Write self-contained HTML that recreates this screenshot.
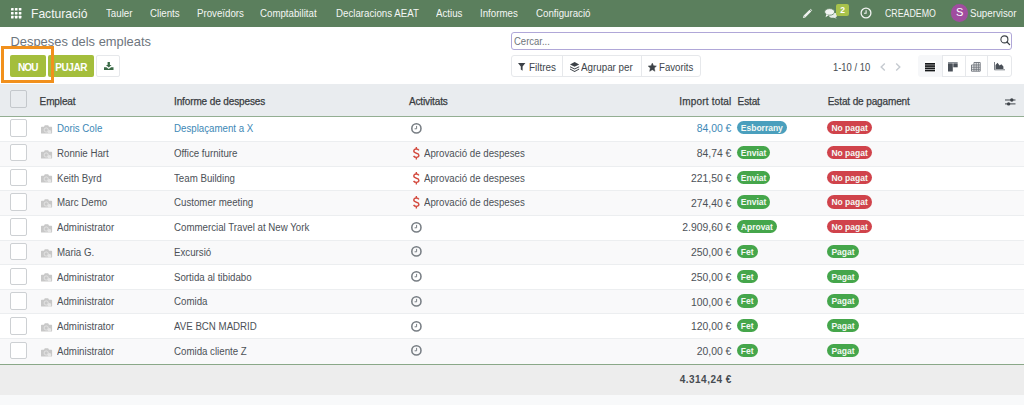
<!DOCTYPE html>
<html><head><meta charset="utf-8">
<style>
*{margin:0;padding:0;box-sizing:border-box}
html,body{width:1024px;height:405px;overflow:hidden;background:#fff;font-family:"Liberation Sans",sans-serif;color:#4c5157}
.a{position:absolute;white-space:nowrap}
svg.a{overflow:visible}
#nav{position:absolute;left:0;top:0;width:1024px;height:27px;background:#5b7f5d}
.nv{position:absolute;top:8.2px;font-size:9.7px;line-height:11px;color:#f4f6f4;white-space:nowrap}
.btn{position:absolute;top:55.2px;height:22px;background:#a4be3c;border-radius:2px;color:#fff;font-weight:bold;font-size:10px;letter-spacing:-0.4px;line-height:25.8px;text-align:center}
.grp{position:absolute;top:55px;height:22px;border:1px solid #e6e8eb;border-radius:3px;background:#fff}
.hd{position:absolute;top:95.6px;font-size:10px;letter-spacing:-0.12px;line-height:11px;font-weight:normal;color:#383c41;-webkit-text-stroke:0.25px #383c41;white-space:nowrap}
.row{position:absolute;left:0;width:1024px}
.cb{position:absolute;left:10px;width:17px;height:17.5px;border:1px solid #cdd0d3;border-radius:2px;background:#fff}
.tx{position:absolute;font-size:9.7px;line-height:11px;color:#4c5157;white-space:nowrap}
.bd{position:absolute;height:13.3px;border-radius:7px;color:#f4f8f4;font-size:8.5px;font-weight:bold;line-height:15px;padding:0 4px;white-space:nowrap}
</style></head><body>
<div id="nav">
<svg class="a" style="left:11px;top:8px" width="10.4" height="10.4" viewBox="0 0 10.4 10.4" fill="#fff"><rect x="0" y="0" width="2.6" height="2.6" rx="0.4"/><rect x="3.9" y="0" width="2.6" height="2.6" rx="0.4"/><rect x="7.8" y="0" width="2.6" height="2.6" rx="0.4"/><rect x="0" y="3.9" width="2.6" height="2.6" rx="0.4"/><rect x="3.9" y="3.9" width="2.6" height="2.6" rx="0.4"/><rect x="7.8" y="3.9" width="2.6" height="2.6" rx="0.4"/><rect x="0" y="7.8" width="2.6" height="2.6" rx="0.4"/><rect x="3.9" y="7.8" width="2.6" height="2.6" rx="0.4"/><rect x="7.8" y="7.8" width="2.6" height="2.6" rx="0.4"/></svg>
<div class="nv" style="left:31px;top:6.6px;font-size:12.1px;line-height:14px">Facturació</div>
<div class="nv" style="left:105.5px;font-size:10px;transform:scaleX(0.970);transform-origin:0 0">Tauler</div>
<div class="nv" style="left:149.5px;font-size:10px;transform:scaleX(0.970);transform-origin:0 0">Clients</div>
<div class="nv" style="left:196.7px;font-size:10px;transform:scaleX(0.970);transform-origin:0 0">Proveïdors</div>
<div class="nv" style="left:260.4px;font-size:10px;transform:scaleX(0.970);transform-origin:0 0">Comptabilitat</div>
<div class="nv" style="left:336.1px;font-size:10px;transform:scaleX(0.970);transform-origin:0 0">Declaracions AEAT</div>
<div class="nv" style="left:435.5px;font-size:10px;transform:scaleX(0.970);transform-origin:0 0">Actius</div>
<div class="nv" style="left:480px;font-size:10px;transform:scaleX(0.970);transform-origin:0 0">Informes</div>
<div class="nv" style="left:535.7px;font-size:10px;transform:scaleX(0.970);transform-origin:0 0">Configuració</div>
<svg class="a" style="left:802px;top:8px" width="11" height="11" viewBox="0 0 11 11"><path d="M2.6 8.4 L8.4 2.6" stroke="#f0f2f0" stroke-width="2.5" stroke-linecap="butt"/><path d="M8.9 2.1 L9.4 1.6" stroke="#f0f2f0" stroke-width="2.5"/><path d="M0.9 10.1 L1.6 7.4 L3.6 9.4 Z" fill="#f0f2f0"/></svg>
<svg class="a" style="left:824px;top:8px" width="14" height="11" viewBox="0 0 14 11"><ellipse cx="9" cy="7.2" rx="4" ry="2.6" fill="#e8ece8"/><path d="M11 9 L12.8 10.8 L9.5 9.6 Z" fill="#e8ece8"/><ellipse cx="5.6" cy="3.9" rx="5" ry="3.3" fill="#f2f4f2" stroke="#5b7f5d" stroke-width="0.8"/><path d="M2.2 6.2 L1.6 9.2 L5 7 Z" fill="#f2f4f2"/></svg>
<div class="a" style="left:836px;top:3.5px;width:13.3px;height:12px;background:#a7c24b;border-radius:2px;color:#fff;font-size:8.5px;font-weight:bold;line-height:12px;text-align:center">2</div>
<svg class="a" style="left:859.5px;top:7.3px" width="12" height="12" viewBox="0 0 12 12"><circle cx="6" cy="6" r="4.9" fill="none" stroke="#f2f4f2" stroke-width="1.3"/><path d="M6.1 3.2 V6.3 H4" fill="none" stroke="#f2f4f2" stroke-width="1.1"/></svg>
<div class="nv" style="left:885px;top:8.3px;font-size:10px;transform:scaleX(0.88);transform-origin:0 0">CREADEMO</div>
<div class="a" style="left:950.8px;top:4.3px;width:17.5px;height:17.5px;border-radius:50%;background:#a04d9f;color:#fff;font-size:11px;line-height:17.5px;text-align:center">S</div>
<div class="nv" style="left:970.4px;font-size:10px;transform:scaleX(0.970);transform-origin:0 0">Supervisor</div>
</div>
<div class="a" style="left:10.5px;top:34.0px;font-size:12.9px;line-height:15px;color:#6d757d">Despeses dels empleats</div>
<div class="btn" style="left:10px;width:36px;letter-spacing:-0.9px;text-indent:-0.6px">NOU</div>
<div class="btn" style="left:48.2px;width:46px">PUJAR</div>
<div class="grp" style="left:96.4px;width:23.3px;border-radius:2px"></div>
<svg class="a" style="left:103.5px;top:62px" width="9.5" height="8" viewBox="0 0 9.5 8"><path d="M3.6 0 H5.9 V3 H7.6 L4.75 5.6 L1.9 3 H3.6 Z" fill="#3b6a47"/><path d="M0 5.2 H2.4 L4.75 7 L7.1 5.2 H9.5 V8 H0 Z" fill="#3b6a47"/></svg>
<div class="a" style="left:1px;top:46.4px;width:52.7px;height:36.4px;border:3.5px solid #f1901d"></div>
<div class="a" style="left:511.2px;top:31.7px;width:501px;height:18.6px;border:1px solid #b0a7d8;border-radius:3px;background:#fff"></div>
<div class="tx" style="left:513.9px;top:35.7px;font-size:10px;color:#6f757b;transform:scaleX(0.950);transform-origin:0 0">Cercar...</div>
<svg class="a" style="left:1000px;top:35px" width="11" height="11" viewBox="0 0 11 11"><circle cx="4.4" cy="4.4" r="3.5" fill="none" stroke="#3c4147" stroke-width="1.1"/><path d="M7 7 L9.6 9.6" stroke="#3c4147" stroke-width="1.3" stroke-linecap="round"/></svg>
<div class="grp" style="left:511.2px;width:189.4px"></div>
<div class="a" style="left:562px;top:55.5px;width:1px;height:21.5px;background:#e6e8eb"></div>
<div class="a" style="left:640.5px;top:55.5px;width:1px;height:21.5px;background:#e6e8eb"></div>
<svg class="a" style="left:518.4px;top:62.9px" width="7.4" height="7.8" viewBox="0 0 7.4 7.8"><path d="M0 0 H7.4 L4.6 3.4 V7.8 L2.8 6.6 V3.4 Z" fill="#3c4147"/></svg>
<div class="tx" style="left:528.5px;top:62.3px;font-size:10px;color:#40464c;transform:scaleX(0.990);transform-origin:0 0">Filtres</div>
<svg class="a" style="left:569.5px;top:62px" width="9.2" height="10" viewBox="0 0 9.2 10"><path d="M4.6 0 L9.2 2.4 L4.6 4.8 L0 2.4 Z" fill="#3c4147"/><path d="M0 4.2 L4.6 6.6 L9.2 4.2 V5.2 L4.6 7.6 L0 5.2 Z" fill="#3c4147"/><path d="M0 6.6 L4.6 9 L9.2 6.6 V7.6 L4.6 10 L0 7.6 Z" fill="#3c4147"/></svg>
<div class="tx" style="left:581.3px;top:62.3px;font-size:10px;color:#40464c;transform:scaleX(0.980);transform-origin:0 0">Agrupar per</div>
<svg class="a" style="left:647.6px;top:62.5px" width="8.6" height="8.4" viewBox="0 0 24 23"><path d="M12 0 L15.5 7.3 L23.6 8.3 L17.6 13.9 L19.3 23 L12 18.6 L4.7 23 L6.4 13.9 L0.4 8.3 L8.5 7.3 Z" fill="#3c4147" stroke="#3c4147" stroke-width="1.2" stroke-linejoin="round"/></svg>
<div class="tx" style="left:658.9px;top:62.3px;font-size:10px;color:#40464c;transform:scaleX(0.965);transform-origin:0 0">Favorits</div>
<div class="tx" style="left:832.9px;top:61.8px;font-size:10px;color:#464c52;transform:scaleX(0.940);transform-origin:0 0">1-10 / 10</div>
<svg class="a" style="left:879.9px;top:62.5px" width="6" height="8" viewBox="0 0 6 8"><path d="M4.8 0.6 L1.2 4 L4.8 7.4" fill="none" stroke="#c5cad0" stroke-width="1.4"/></svg>
<svg class="a" style="left:895.3px;top:62.5px" width="6" height="8" viewBox="0 0 6 8"><path d="M1.2 0.6 L4.8 4 L1.2 7.4" fill="none" stroke="#c5cad0" stroke-width="1.4"/></svg>
<div class="grp" style="left:941.2px;width:71.2px;border-radius:0 3px 3px 0"></div>
<div class="a" style="left:918px;top:55.4px;width:23.7px;height:21.6px;background:#f6f7f9;border-radius:3px 0 0 3px"></div>
<div class="a" style="left:924.5px;top:61.3px;width:11px;height:10.5px;background:#fff"></div>
<div class="a" style="left:941.7px;top:55.5px;width:1px;height:21.5px;background:#e6e8eb"></div>
<div class="a" style="left:964.8px;top:55.5px;width:1px;height:21.5px;background:#e6e8eb"></div>
<div class="a" style="left:987.3px;top:55.5px;width:1px;height:21.5px;background:#e6e8eb"></div>
<svg class="a" style="left:925px;top:62.6px" width="10" height="8.4" viewBox="0 0 10 8.4" fill="#16181a"><rect y="0" width="10" height="1.7"/><rect y="2.23" width="10" height="1.7"/><rect y="4.46" width="10" height="1.7"/><rect y="6.7" width="10" height="1.7"/></svg>
<svg class="a" style="left:948.1px;top:61.8px" width="9.7" height="9.5" viewBox="0 0 9.7 9.5"><rect x="0" y="0" width="9.7" height="1" fill="#8a9097"/><rect x="0" y="1.3" width="4.8" height="8.2" fill="#4a5058"/><rect x="5.3" y="1.3" width="4.4" height="4" fill="#4a5058"/></svg>
<svg class="a" style="left:971.2px;top:61.8px" width="9.7" height="9.7" viewBox="0 0 9.7 9.7"><path d="M3 0.5 H9.2 V9.2 H0.5 V3 H9.2 M0.5 5.2 H9.2 M0.5 7.3 H9.2 M3 0.5 V9.2 M5.2 0.5 V9.2 M7.3 0.5 V9.2" fill="none" stroke="#6b7178" stroke-width="0.9"/></svg>
<svg class="a" style="left:994.1px;top:62.4px" width="11" height="8.3" viewBox="0 0 11 8.3"><path d="M0.5 0 V7.8 H11" fill="none" stroke="#6b7178" stroke-width="0.9"/><path d="M1.5 7 V3 L3.5 0.8 L5.6 3.4 L7.4 2.2 L9.4 4.6 V7 Z" fill="#4a5058"/></svg>
<div class="a" style="left:0;top:83.7px;width:1024px;height:32.5px;background:#e9ecef"></div>
<div class="a" style="left:0;top:116px;width:1024px;height:1px;background:#93ae92"></div>
<div class="a" style="left:0;top:117px;width:1024px;height:1px;background:#e3ebe3"></div>
<div class="hd" style="left:39.6px">Empleat</div>
<div class="hd" style="left:174px">Informe de despeses</div>
<div class="hd" style="left:408.9px">Activitats</div>
<div class="hd" style="left:737.6px">Estat</div>
<div class="hd" style="left:827.8px">Estat de pagament</div>
<div class="hd" style="right:292.5px;letter-spacing:0.18px">Import total</div>
<div class="cb" style="top:90px;background:transparent;border-color:#c4c8cc"></div>
<svg class="a" style="left:1005px;top:97.5px" width="10.5" height="7.6" viewBox="0 0 10.5 7.6"><path d="M0 2 H10.5 M0 5.9 H10.5" stroke="#3e4349" stroke-width="1"/><circle cx="6.8" cy="2" r="1.7" fill="#3e4349"/><circle cx="3.6" cy="5.9" r="1.7" fill="#3e4349"/></svg>
<div class="row" style="top:117px;height:24px;background:#ffffff"></div>
<div class="a" style="left:0;top:141px;width:1024px;height:1px;background:#eceef0"></div>
<div class="cb" style="top:119.10px"></div>
<svg class="a" style="left:40.9px;top:124.90px" width="11.1" height="8.5" viewBox="0 0 11.1 8.5"><path d="M0.6 1.8 H3 L3.8 0.3 H7.2 L8 1.8 H10.5 Q11.1 1.8 11.1 2.4 V7.9 Q11.1 8.5 10.5 8.5 H0.6 Q0 8.5 0 7.9 V2.4 Q0 1.8 0.6 1.8 Z" fill="#c8c8c8"/><circle cx="5.2" cy="5" r="2.1" fill="none" stroke="#e9e9e9" stroke-width="0.8"/><circle cx="8.4" cy="7" r="1.9" fill="#e6e6e6"/></svg>
<div class="tx" style="left:56.5px;top:123.20px;color:#3d88b6;font-size:10px;transform:scaleX(0.970);transform-origin:0 0">Doris Cole</div>
<div class="tx" style="left:174.2px;top:123.20px;color:#3d88b6;font-size:10px;transform:scaleX(0.970);transform-origin:0 0">Desplaçament a X</div>
<svg class="a" style="left:410.7px;top:122.70px" width="10.8" height="10.8" viewBox="0 0 10.8 10.8"><circle cx="5.4" cy="5.4" r="4.6" fill="none" stroke="#777d83" stroke-width="1.55"/><path d="M5.6 2.9 V5.8 H3.6" fill="none" stroke="#777d83" stroke-width="1"/></svg>
<div class="tx" style="right:292.6px;top:123.40px;font-size:10.4px;color:#3d88b6">84,00 €</div>
<div class="bd" style="left:736.8px;top:121.10px;background:#4a9fbd">Esborrany</div>
<div class="bd" style="left:827.4px;top:121.10px;background:#d0434b">No pagat</div>
<div class="row" style="top:142px;height:24px;background:#f9f9fa"></div>
<div class="a" style="left:0;top:166px;width:1024px;height:1px;background:#eceef0"></div>
<div class="cb" style="top:143.85px"></div>
<svg class="a" style="left:40.9px;top:149.65px" width="11.1" height="8.5" viewBox="0 0 11.1 8.5"><path d="M0.6 1.8 H3 L3.8 0.3 H7.2 L8 1.8 H10.5 Q11.1 1.8 11.1 2.4 V7.9 Q11.1 8.5 10.5 8.5 H0.6 Q0 8.5 0 7.9 V2.4 Q0 1.8 0.6 1.8 Z" fill="#c8c8c8"/><circle cx="5.2" cy="5" r="2.1" fill="none" stroke="#e9e9e9" stroke-width="0.8"/><circle cx="8.4" cy="7" r="1.9" fill="#e6e6e6"/></svg>
<div class="tx" style="left:56.5px;top:147.95px;color:#4c5157;font-size:10px;transform:scaleX(0.970);transform-origin:0 0">Ronnie Hart</div>
<div class="tx" style="left:174.2px;top:147.95px;color:#4c5157;font-size:10px;transform:scaleX(0.970);transform-origin:0 0">Office furniture</div>
<svg class="a" style="left:412.9px;top:146.90px" width="6.7" height="12.4" viewBox="0 0 6.7 12.4"><path d="M3.35 0 V2 M3.35 10.4 V12.4" stroke="#d34a3e" stroke-width="1.4"/><path d="M5.9 3.4 Q5.2 2 3.35 2 Q0.8 2 0.8 4.1 Q0.8 5.6 3.35 6.2 Q5.9 6.8 5.9 8.3 Q5.9 10.4 3.35 10.4 Q1.3 10.4 0.6 8.9" fill="none" stroke="#d34a3e" stroke-width="1.4"/></svg>
<div class="tx" style="left:424.2px;top:147.95px;font-size:10px;transform:scaleX(0.970);transform-origin:0 0">Aprovació de despeses</div>
<div class="tx" style="right:292.6px;top:148.15px;font-size:10.4px;color:#4c5157">84,74 €</div>
<div class="bd" style="left:736.8px;top:145.85px;background:#45a64b">Enviat</div>
<div class="bd" style="left:827.4px;top:145.85px;background:#d0434b">No pagat</div>
<div class="row" style="top:167px;height:23px;background:#ffffff"></div>
<div class="a" style="left:0;top:190px;width:1024px;height:1px;background:#eceef0"></div>
<div class="cb" style="top:168.60px"></div>
<svg class="a" style="left:40.9px;top:174.40px" width="11.1" height="8.5" viewBox="0 0 11.1 8.5"><path d="M0.6 1.8 H3 L3.8 0.3 H7.2 L8 1.8 H10.5 Q11.1 1.8 11.1 2.4 V7.9 Q11.1 8.5 10.5 8.5 H0.6 Q0 8.5 0 7.9 V2.4 Q0 1.8 0.6 1.8 Z" fill="#c8c8c8"/><circle cx="5.2" cy="5" r="2.1" fill="none" stroke="#e9e9e9" stroke-width="0.8"/><circle cx="8.4" cy="7" r="1.9" fill="#e6e6e6"/></svg>
<div class="tx" style="left:56.5px;top:172.70px;color:#4c5157;font-size:10px;transform:scaleX(0.970);transform-origin:0 0">Keith Byrd</div>
<div class="tx" style="left:174.2px;top:172.70px;color:#4c5157;font-size:10px;transform:scaleX(0.970);transform-origin:0 0">Team Building</div>
<svg class="a" style="left:412.9px;top:171.65px" width="6.7" height="12.4" viewBox="0 0 6.7 12.4"><path d="M3.35 0 V2 M3.35 10.4 V12.4" stroke="#d34a3e" stroke-width="1.4"/><path d="M5.9 3.4 Q5.2 2 3.35 2 Q0.8 2 0.8 4.1 Q0.8 5.6 3.35 6.2 Q5.9 6.8 5.9 8.3 Q5.9 10.4 3.35 10.4 Q1.3 10.4 0.6 8.9" fill="none" stroke="#d34a3e" stroke-width="1.4"/></svg>
<div class="tx" style="left:424.2px;top:172.70px;font-size:10px;transform:scaleX(0.970);transform-origin:0 0">Aprovació de despeses</div>
<div class="tx" style="right:292.6px;top:172.90px;font-size:10.4px;color:#4c5157">221,50 €</div>
<div class="bd" style="left:736.8px;top:170.60px;background:#45a64b">Enviat</div>
<div class="bd" style="left:827.4px;top:170.60px;background:#d0434b">No pagat</div>
<div class="row" style="top:191px;height:24px;background:#f9f9fa"></div>
<div class="a" style="left:0;top:215px;width:1024px;height:1px;background:#eceef0"></div>
<div class="cb" style="top:193.35px"></div>
<svg class="a" style="left:40.9px;top:199.15px" width="11.1" height="8.5" viewBox="0 0 11.1 8.5"><path d="M0.6 1.8 H3 L3.8 0.3 H7.2 L8 1.8 H10.5 Q11.1 1.8 11.1 2.4 V7.9 Q11.1 8.5 10.5 8.5 H0.6 Q0 8.5 0 7.9 V2.4 Q0 1.8 0.6 1.8 Z" fill="#c8c8c8"/><circle cx="5.2" cy="5" r="2.1" fill="none" stroke="#e9e9e9" stroke-width="0.8"/><circle cx="8.4" cy="7" r="1.9" fill="#e6e6e6"/></svg>
<div class="tx" style="left:56.5px;top:197.45px;color:#4c5157;font-size:10px;transform:scaleX(0.970);transform-origin:0 0">Marc Demo</div>
<div class="tx" style="left:174.2px;top:197.45px;color:#4c5157;font-size:10px;transform:scaleX(0.970);transform-origin:0 0">Customer meeting</div>
<svg class="a" style="left:412.9px;top:196.40px" width="6.7" height="12.4" viewBox="0 0 6.7 12.4"><path d="M3.35 0 V2 M3.35 10.4 V12.4" stroke="#d34a3e" stroke-width="1.4"/><path d="M5.9 3.4 Q5.2 2 3.35 2 Q0.8 2 0.8 4.1 Q0.8 5.6 3.35 6.2 Q5.9 6.8 5.9 8.3 Q5.9 10.4 3.35 10.4 Q1.3 10.4 0.6 8.9" fill="none" stroke="#d34a3e" stroke-width="1.4"/></svg>
<div class="tx" style="left:424.2px;top:197.45px;font-size:10px;transform:scaleX(0.970);transform-origin:0 0">Aprovació de despeses</div>
<div class="tx" style="right:292.6px;top:197.65px;font-size:10.4px;color:#4c5157">274,40 €</div>
<div class="bd" style="left:736.8px;top:195.35px;background:#45a64b">Enviat</div>
<div class="bd" style="left:827.4px;top:195.35px;background:#d0434b">No pagat</div>
<div class="row" style="top:216px;height:24px;background:#ffffff"></div>
<div class="a" style="left:0;top:240px;width:1024px;height:1px;background:#eceef0"></div>
<div class="cb" style="top:218.10px"></div>
<svg class="a" style="left:40.9px;top:223.90px" width="11.1" height="8.5" viewBox="0 0 11.1 8.5"><path d="M0.6 1.8 H3 L3.8 0.3 H7.2 L8 1.8 H10.5 Q11.1 1.8 11.1 2.4 V7.9 Q11.1 8.5 10.5 8.5 H0.6 Q0 8.5 0 7.9 V2.4 Q0 1.8 0.6 1.8 Z" fill="#c8c8c8"/><circle cx="5.2" cy="5" r="2.1" fill="none" stroke="#e9e9e9" stroke-width="0.8"/><circle cx="8.4" cy="7" r="1.9" fill="#e6e6e6"/></svg>
<div class="tx" style="left:56.5px;top:222.20px;color:#4c5157;font-size:10px;transform:scaleX(0.970);transform-origin:0 0">Administrator</div>
<div class="tx" style="left:174.2px;top:222.20px;color:#4c5157;font-size:10px;transform:scaleX(0.970);transform-origin:0 0">Commercial Travel at New York</div>
<svg class="a" style="left:410.7px;top:221.70px" width="10.8" height="10.8" viewBox="0 0 10.8 10.8"><circle cx="5.4" cy="5.4" r="4.6" fill="none" stroke="#777d83" stroke-width="1.55"/><path d="M5.6 2.9 V5.8 H3.6" fill="none" stroke="#777d83" stroke-width="1"/></svg>
<div class="tx" style="right:292.6px;top:222.40px;font-size:10.4px;color:#4c5157">2.909,60 €</div>
<div class="bd" style="left:736.8px;top:220.10px;background:#45a64b">Aprovat</div>
<div class="bd" style="left:827.4px;top:220.10px;background:#d0434b">No pagat</div>
<div class="row" style="top:241px;height:23px;background:#f9f9fa"></div>
<div class="a" style="left:0;top:264px;width:1024px;height:1px;background:#eceef0"></div>
<div class="cb" style="top:242.85px"></div>
<svg class="a" style="left:40.9px;top:248.65px" width="11.1" height="8.5" viewBox="0 0 11.1 8.5"><path d="M0.6 1.8 H3 L3.8 0.3 H7.2 L8 1.8 H10.5 Q11.1 1.8 11.1 2.4 V7.9 Q11.1 8.5 10.5 8.5 H0.6 Q0 8.5 0 7.9 V2.4 Q0 1.8 0.6 1.8 Z" fill="#c8c8c8"/><circle cx="5.2" cy="5" r="2.1" fill="none" stroke="#e9e9e9" stroke-width="0.8"/><circle cx="8.4" cy="7" r="1.9" fill="#e6e6e6"/></svg>
<div class="tx" style="left:56.5px;top:246.95px;color:#4c5157;font-size:10px;transform:scaleX(0.970);transform-origin:0 0">Maria G.</div>
<div class="tx" style="left:174.2px;top:246.95px;color:#4c5157;font-size:10px;transform:scaleX(0.970);transform-origin:0 0">Excursió</div>
<svg class="a" style="left:410.7px;top:246.45px" width="10.8" height="10.8" viewBox="0 0 10.8 10.8"><circle cx="5.4" cy="5.4" r="4.6" fill="none" stroke="#777d83" stroke-width="1.55"/><path d="M5.6 2.9 V5.8 H3.6" fill="none" stroke="#777d83" stroke-width="1"/></svg>
<div class="tx" style="right:292.6px;top:247.15px;font-size:10.4px;color:#4c5157">250,00 €</div>
<div class="bd" style="left:736.8px;top:244.85px;background:#45a64b">Fet</div>
<div class="bd" style="left:827.4px;top:244.85px;background:#45a64b">Pagat</div>
<div class="row" style="top:265px;height:24px;background:#ffffff"></div>
<div class="a" style="left:0;top:289px;width:1024px;height:1px;background:#eceef0"></div>
<div class="cb" style="top:267.60px"></div>
<svg class="a" style="left:40.9px;top:273.40px" width="11.1" height="8.5" viewBox="0 0 11.1 8.5"><path d="M0.6 1.8 H3 L3.8 0.3 H7.2 L8 1.8 H10.5 Q11.1 1.8 11.1 2.4 V7.9 Q11.1 8.5 10.5 8.5 H0.6 Q0 8.5 0 7.9 V2.4 Q0 1.8 0.6 1.8 Z" fill="#c8c8c8"/><circle cx="5.2" cy="5" r="2.1" fill="none" stroke="#e9e9e9" stroke-width="0.8"/><circle cx="8.4" cy="7" r="1.9" fill="#e6e6e6"/></svg>
<div class="tx" style="left:56.5px;top:271.70px;color:#4c5157;font-size:10px;transform:scaleX(0.970);transform-origin:0 0">Administrator</div>
<div class="tx" style="left:174.2px;top:271.70px;color:#4c5157;font-size:10px;transform:scaleX(0.970);transform-origin:0 0">Sortida al tibidabo</div>
<svg class="a" style="left:410.7px;top:271.20px" width="10.8" height="10.8" viewBox="0 0 10.8 10.8"><circle cx="5.4" cy="5.4" r="4.6" fill="none" stroke="#777d83" stroke-width="1.55"/><path d="M5.6 2.9 V5.8 H3.6" fill="none" stroke="#777d83" stroke-width="1"/></svg>
<div class="tx" style="right:292.6px;top:271.90px;font-size:10.4px;color:#4c5157">250,00 €</div>
<div class="bd" style="left:736.8px;top:269.60px;background:#45a64b">Fet</div>
<div class="bd" style="left:827.4px;top:269.60px;background:#45a64b">Pagat</div>
<div class="row" style="top:290px;height:23px;background:#f9f9fa"></div>
<div class="a" style="left:0;top:313px;width:1024px;height:1px;background:#eceef0"></div>
<div class="cb" style="top:292.35px"></div>
<svg class="a" style="left:40.9px;top:298.15px" width="11.1" height="8.5" viewBox="0 0 11.1 8.5"><path d="M0.6 1.8 H3 L3.8 0.3 H7.2 L8 1.8 H10.5 Q11.1 1.8 11.1 2.4 V7.9 Q11.1 8.5 10.5 8.5 H0.6 Q0 8.5 0 7.9 V2.4 Q0 1.8 0.6 1.8 Z" fill="#c8c8c8"/><circle cx="5.2" cy="5" r="2.1" fill="none" stroke="#e9e9e9" stroke-width="0.8"/><circle cx="8.4" cy="7" r="1.9" fill="#e6e6e6"/></svg>
<div class="tx" style="left:56.5px;top:296.45px;color:#4c5157;font-size:10px;transform:scaleX(0.970);transform-origin:0 0">Administrator</div>
<div class="tx" style="left:174.2px;top:296.45px;color:#4c5157;font-size:10px;transform:scaleX(0.970);transform-origin:0 0">Comida</div>
<svg class="a" style="left:410.7px;top:295.95px" width="10.8" height="10.8" viewBox="0 0 10.8 10.8"><circle cx="5.4" cy="5.4" r="4.6" fill="none" stroke="#777d83" stroke-width="1.55"/><path d="M5.6 2.9 V5.8 H3.6" fill="none" stroke="#777d83" stroke-width="1"/></svg>
<div class="tx" style="right:292.6px;top:296.65px;font-size:10.4px;color:#4c5157">100,00 €</div>
<div class="bd" style="left:736.8px;top:294.35px;background:#45a64b">Fet</div>
<div class="bd" style="left:827.4px;top:294.35px;background:#45a64b">Pagat</div>
<div class="row" style="top:314px;height:24px;background:#ffffff"></div>
<div class="a" style="left:0;top:338px;width:1024px;height:1px;background:#eceef0"></div>
<div class="cb" style="top:317.10px"></div>
<svg class="a" style="left:40.9px;top:322.90px" width="11.1" height="8.5" viewBox="0 0 11.1 8.5"><path d="M0.6 1.8 H3 L3.8 0.3 H7.2 L8 1.8 H10.5 Q11.1 1.8 11.1 2.4 V7.9 Q11.1 8.5 10.5 8.5 H0.6 Q0 8.5 0 7.9 V2.4 Q0 1.8 0.6 1.8 Z" fill="#c8c8c8"/><circle cx="5.2" cy="5" r="2.1" fill="none" stroke="#e9e9e9" stroke-width="0.8"/><circle cx="8.4" cy="7" r="1.9" fill="#e6e6e6"/></svg>
<div class="tx" style="left:56.5px;top:321.20px;color:#4c5157;font-size:10px;transform:scaleX(0.970);transform-origin:0 0">Administrator</div>
<div class="tx" style="left:174.2px;top:321.20px;color:#4c5157;font-size:10px;transform:scaleX(0.970);transform-origin:0 0">AVE BCN MADRID</div>
<svg class="a" style="left:410.7px;top:320.70px" width="10.8" height="10.8" viewBox="0 0 10.8 10.8"><circle cx="5.4" cy="5.4" r="4.6" fill="none" stroke="#777d83" stroke-width="1.55"/><path d="M5.6 2.9 V5.8 H3.6" fill="none" stroke="#777d83" stroke-width="1"/></svg>
<div class="tx" style="right:292.6px;top:321.40px;font-size:10.4px;color:#4c5157">120,00 €</div>
<div class="bd" style="left:736.8px;top:319.10px;background:#45a64b">Fet</div>
<div class="bd" style="left:827.4px;top:319.10px;background:#45a64b">Pagat</div>
<div class="row" style="top:339px;height:25px;background:#f9f9fa"></div>
<div class="cb" style="top:341.85px"></div>
<svg class="a" style="left:40.9px;top:347.65px" width="11.1" height="8.5" viewBox="0 0 11.1 8.5"><path d="M0.6 1.8 H3 L3.8 0.3 H7.2 L8 1.8 H10.5 Q11.1 1.8 11.1 2.4 V7.9 Q11.1 8.5 10.5 8.5 H0.6 Q0 8.5 0 7.9 V2.4 Q0 1.8 0.6 1.8 Z" fill="#c8c8c8"/><circle cx="5.2" cy="5" r="2.1" fill="none" stroke="#e9e9e9" stroke-width="0.8"/><circle cx="8.4" cy="7" r="1.9" fill="#e6e6e6"/></svg>
<div class="tx" style="left:56.5px;top:345.95px;color:#4c5157;font-size:10px;transform:scaleX(0.970);transform-origin:0 0">Administrator</div>
<div class="tx" style="left:174.2px;top:345.95px;color:#4c5157;font-size:10px;transform:scaleX(0.970);transform-origin:0 0">Comida cliente Z</div>
<svg class="a" style="left:410.7px;top:345.45px" width="10.8" height="10.8" viewBox="0 0 10.8 10.8"><circle cx="5.4" cy="5.4" r="4.6" fill="none" stroke="#777d83" stroke-width="1.55"/><path d="M5.6 2.9 V5.8 H3.6" fill="none" stroke="#777d83" stroke-width="1"/></svg>
<div class="tx" style="right:292.6px;top:346.15px;font-size:10.4px;color:#4c5157">20,00 €</div>
<div class="bd" style="left:736.8px;top:343.85px;background:#45a64b">Fet</div>
<div class="bd" style="left:827.4px;top:343.85px;background:#45a64b">Pagat</div>
<div class="a" style="left:0;top:364px;width:1024px;height:30.7px;background:#ededed"></div>
<div class="a" style="left:0;top:364px;width:1024px;height:1px;background:#8aa888"></div>
<div class="a" style="left:0;top:394.7px;width:1024px;height:11px;background:#f8f9fa"></div>
<div class="a" style="right:292.1px;top:374.4px;font-size:10px;letter-spacing:0.5px;line-height:11px;font-weight:bold;color:#474c52">4.314,24 €</div>
</body></html>
